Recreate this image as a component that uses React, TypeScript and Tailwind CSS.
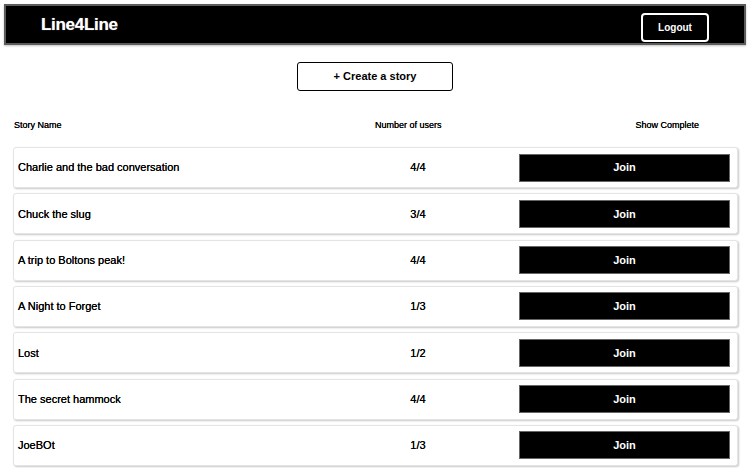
import React from "react";

const stories = [
  { name: "Charlie and the bad conversation", users: "4/4" },
  { name: "Chuck the slug", users: "3/4" },
  { name: "A trip to Boltons peak!", users: "4/4" },
  { name: "A Night to Forget", users: "1/3" },
  { name: "Lost", users: "1/2" },
  { name: "The secret hammock", users: "4/4" },
  { name: "JoeBOt", users: "1/3" },
];

export default function App() {
  return (
    <div className="w-[750px] h-[468px] overflow-hidden bg-white font-['Liberation_Sans',Arial,sans-serif] text-black">
      <header className="mx-[4px] mt-[4px] h-[41px] bg-black border-2 border-[#5c5c5c] shadow-[0_1px_2px_rgba(0,0,0,0.25)] flex items-center justify-between pl-[35px] pr-[35px]">
        <span className="text-white font-bold text-[17px] tracking-[-0.3px] [text-shadow:0_0_1px_#999]">Line4Line</span>
        <button className="mt-[5px] w-[68px] h-[29px] border-2 border-white rounded-[4px] text-white font-bold text-[10px] flex items-center justify-center">
          Logout
        </button>
      </header>

      <div className="flex justify-center mt-[17px]">
        <button className="w-[156px] h-[29px] border-[1.5px] border-black rounded-[3px] font-bold text-[11px] flex items-center justify-center">
          + Create a story
        </button>
      </div>

      <div className="flex items-center h-[20px] mt-[25px] text-[9px] font-medium whitespace-nowrap [text-shadow:0_0_0.3px_#000]">
        <span className="pl-[14px] w-[375px]">Story Name</span>
        <span className="w-[66px] text-center">Number of users</span>
        <span className="ml-auto mr-[51px]">Show Complete</span>
      </div>

      <div className="flex flex-col gap-[5.33px] mt-[11px] ml-[13px] mr-[12px]">
        {stories.map((s) => (
          <div
            key={s.name}
            className="h-[41px] flex items-center bg-white border border-[#e4e4e4] rounded-[3px] shadow-[1px_1px_2px_rgba(0,0,0,0.22)] pl-[4px] pr-[7px]"
          >
            <span className="w-[341px] text-[11px] [text-shadow:0_0_0.25px_#000]">{s.name}</span>
            <span className="w-[118px] text-center text-[11px] [text-shadow:0_0_0.25px_#000]">{s.users}</span>
            <button className="ml-auto w-[211px] h-[28px] bg-black border border-[#666] text-white font-bold text-[11px] flex items-center justify-center">
              Join
            </button>
          </div>
        ))}
      </div>
    </div>
  );
}
